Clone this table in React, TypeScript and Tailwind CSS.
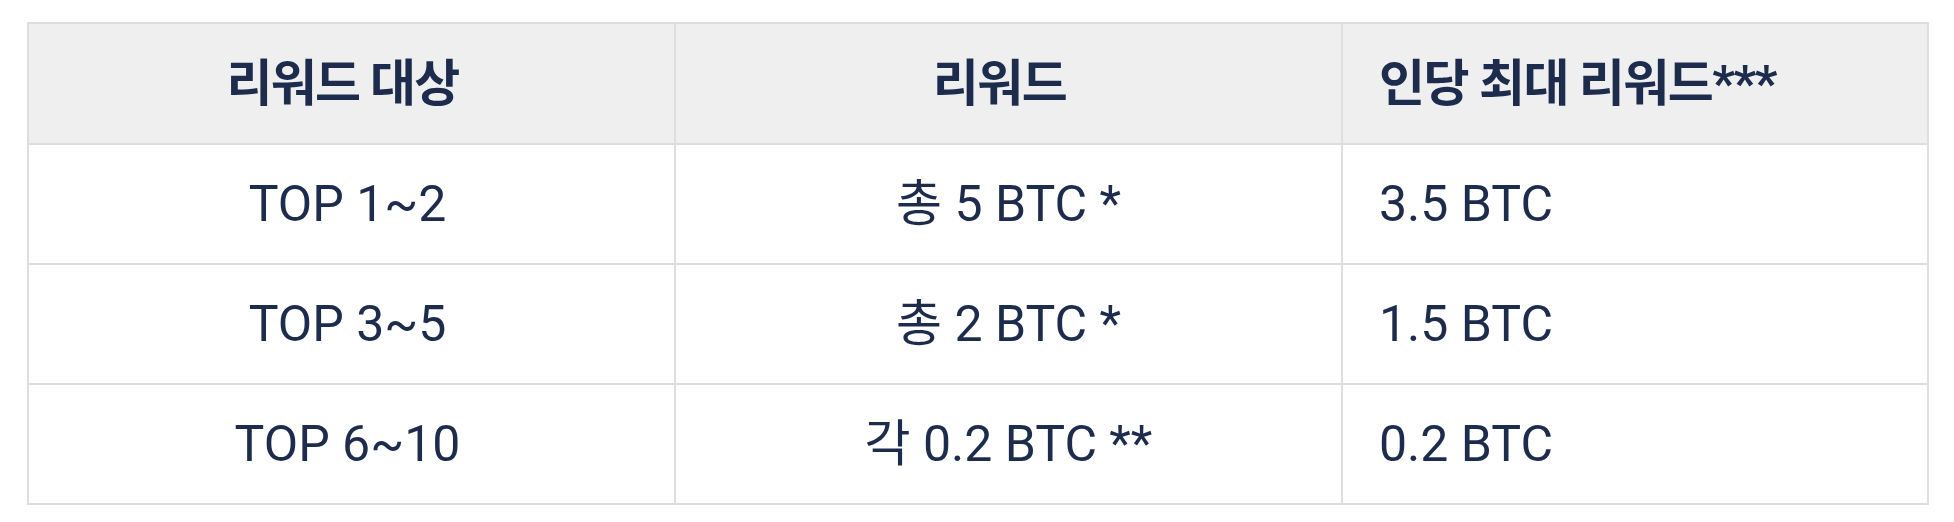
import React from 'react';

const rows = [
  { target: 'TOP 1~2', reward: '총 5 BTC *', max: '3.5 BTC' },
  { target: 'TOP 3~5', reward: '총 2 BTC *', max: '1.5 BTC' },
  { target: 'TOP 6~10', reward: '각 0.2 BTC **', max: '0.2 BTC' },
];

export default function App() {
  return (
    <div
      className="bg-white w-[1954px] h-[522px] pl-[27px] pr-[25px] pt-[22px]"
      style={{ fontFamily: 'Roboto, "Noto Sans CJK KR", sans-serif' }}
    >
      <table className="w-full border-collapse border-2 border-[#dedede] text-[#1d2b4c] text-[50px] leading-none">
        <colgroup>
          <col className="w-[647px]" />
          <col className="w-[667px]" />
          <col />
        </colgroup>
        <thead>
          <tr className="h-[121px] bg-[#efefef]">
            <th className="border-2 border-[#dedede] text-center pr-[18px] font-bold tracking-[-0.035em]">리워드 대상</th>
            <th className="border-2 border-[#dedede] text-center pr-[18px] font-bold tracking-[-0.03em]">리워드</th>
            <th className="border-2 border-[#dedede] text-left pl-[36px] font-bold tracking-[-0.03em]">인당 최대 리워드***</th>
          </tr>
        </thead>
        <tbody>
          {rows.map((r) => (
            <tr key={r.target} className="h-[120px]">
              <td className="border-2 border-[#dedede] text-center pr-[8px]">{r.target}</td>
              <td className="border-2 border-[#dedede] text-center">{r.reward}</td>
              <td className="border-2 border-[#dedede] text-left pl-[36px]">{r.max}</td>
            </tr>
          ))}
        </tbody>
      </table>
    </div>
  );
}
